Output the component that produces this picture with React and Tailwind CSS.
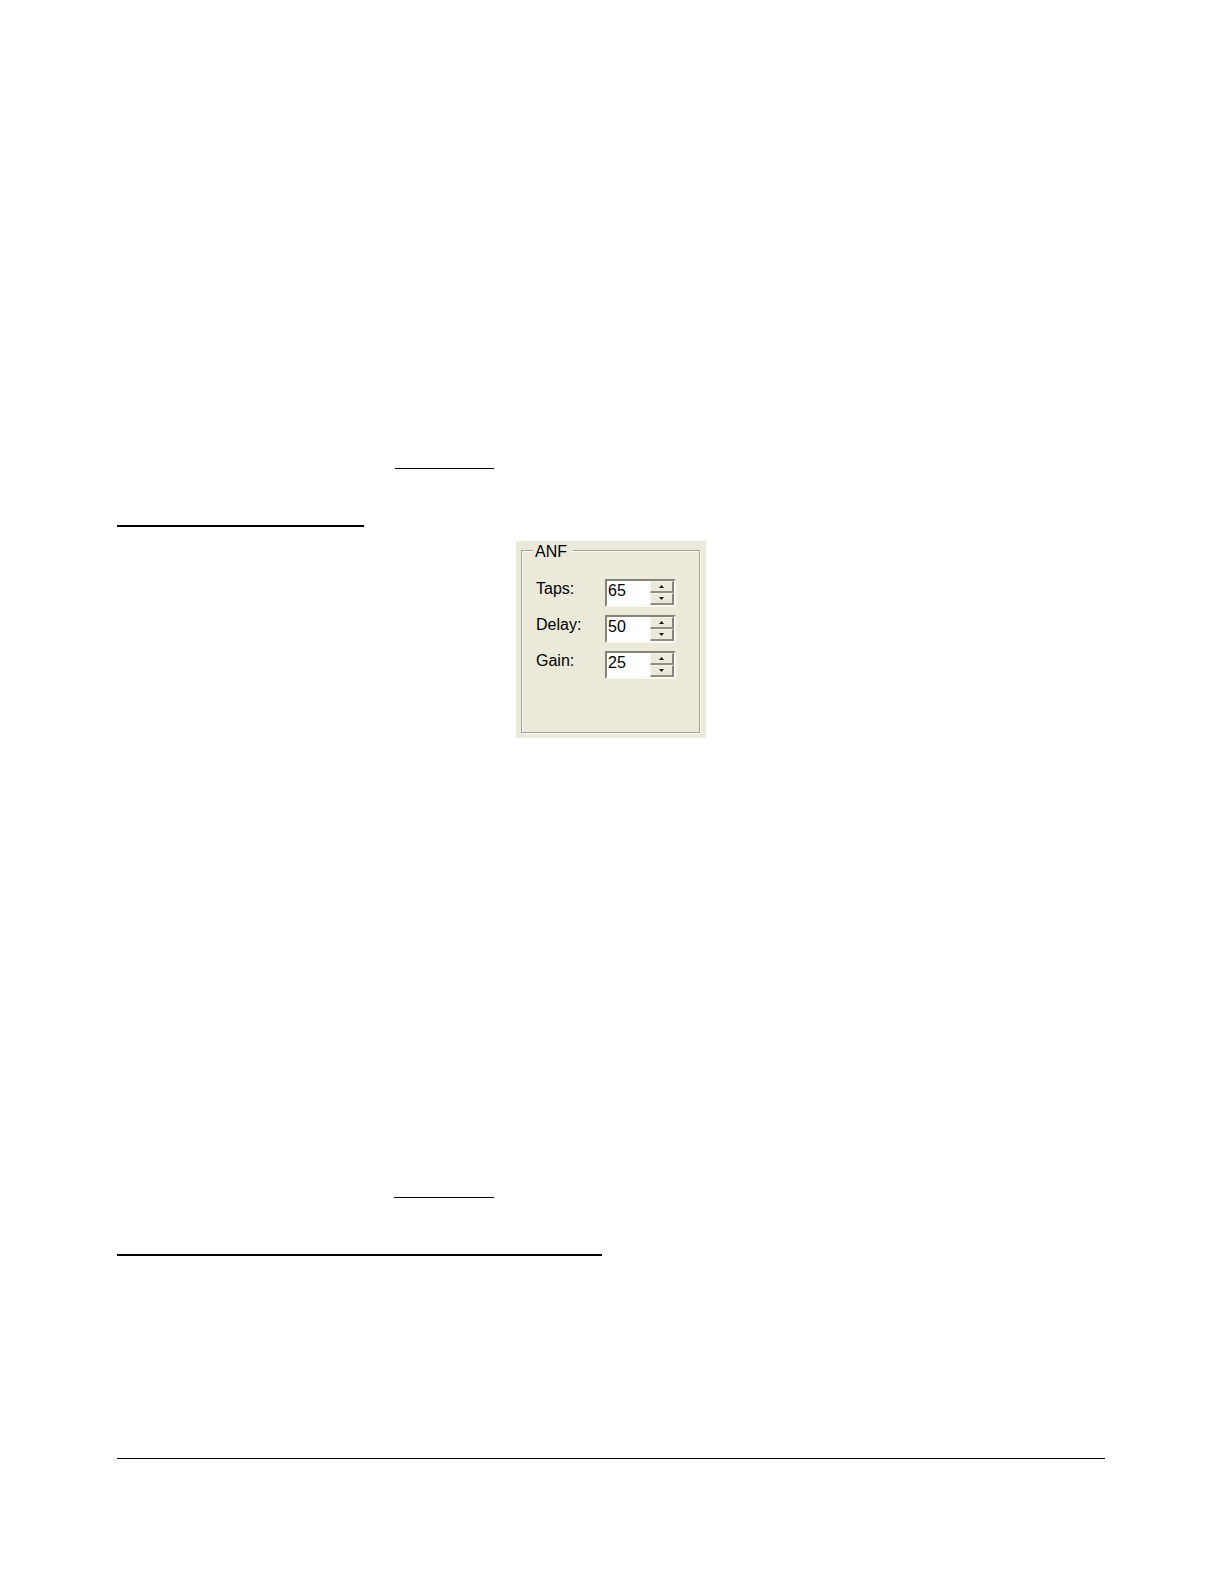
import { useState } from 'react'

const FIELDS = [
  { id: 'taps', label: 'Taps:', initial: 65 },
  { id: 'delay', label: 'Delay:', initial: 50 },
  { id: 'gain', label: 'Gain:', initial: 25 }
]

function SpinButton({ label, points, onClick }) {
  return (
    <button
      type="button"
      aria-label={label}
      onClick={onClick}
      className="flex flex-1 items-center justify-center bg-[#ebe9da] border-t border-l border-b-2 border-r-2 border-t-[#f7f5ea] border-l-[#f7f5ea] border-b-[#918f83] border-r-[#85837a]"
    >
      <svg width="5" height="3" viewBox="0 0 5 3">
        <polygon points={points} fill="#111" />
      </svg>
    </button>
  )
}

function SpinBox({ id, label, initial }) {
  const [value, setValue] = useState(initial)

  return (
    <div className="flex items-start">
      <label htmlFor={id} className="w-[69px] leading-5">{label}</label>
      <div className="flex w-[71px] h-7 bg-white border-2 border-t-[#85837a] border-l-[#85837a] border-b-[#faf9f4] border-r-[#faf9f4]">
        <input
          id={id}
          type="text"
          inputMode="numeric"
          value={value}
          onChange={(e) => setValue(Number(e.target.value) || 0)}
          className="w-[43px] h-5 pl-px leading-5 bg-white outline-none"
        />
        <div className="flex flex-1 flex-col">
          <SpinButton label={`Increase ${id}`} points="2.5,0 5,3 0,3" onClick={() => setValue(value + 1)} />
          <SpinButton label={`Decrease ${id}`} points="0,0 5,0 2.5,3" onClick={() => setValue(value - 1)} />
        </div>
      </div>
    </div>
  )
}

function App() {
  return (
    <main className="min-h-screen bg-white pt-[468px] pb-16 pl-[117px] pr-[119px] font-['Liberation_Sans',Arial,sans-serif] text-base text-black">
      {/* Link and heading rules */}
      <hr className="w-[99px] ml-[278px] border-t border-black" />
      <hr className="w-[247px] mt-14 border-t-2 border-black" />

      <section className="w-[190px] mx-auto mt-3.5 pb-[5px] pl-[5px] pr-1.5 bg-[#ebe9da]">
        <fieldset className="pb-[53px] pl-3.5 border border-[#a5a397] shadow-[1px_1px_0_#faf9f2,inset_1px_1px_0_#faf9f2]">
          <legend className="h-[18px] -ml-[3px] pl-0.5 pr-1.5 leading-[22px] bg-[#ebe9da]">ANF</legend>
          <div className="flex flex-col gap-2 pt-5">
            {FIELDS.map((f) => (
              <SpinBox key={f.id} {...f} />
            ))}
          </div>
        </fieldset>
      </section>

      <hr className="w-[100px] ml-[277px] mt-[459px] border-t border-black" />
      <hr className="w-[485px] mt-14 border-t-2 border-black" />

      {/* Footer rule */}
      <hr className="mt-[202px] border-t border-black" />
    </main>
  )
}

export default App
